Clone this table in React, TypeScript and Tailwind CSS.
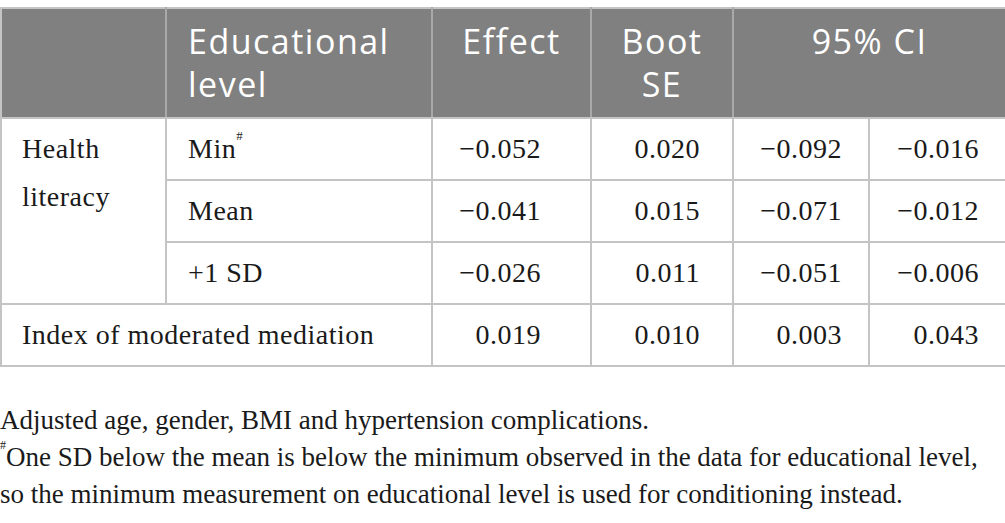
import * as React from "react";

const SANS = "font-['Open_Sans','Noto_Sans',sans-serif]";
const SERIF = "font-['Liberation_Serif','Times_New_Roman',serif]";

const LINE = "border-2 border-[#c4c4c4]";
const HEAD =
  "border-2 border-x-[#a9a9a9] border-t-[#c4c4c4] border-b-[#c4c4c4] align-top px-[21px] py-[11px] text-[34px] tracking-[1.5px] leading-[43px] font-normal text-white";
const CELL = `${LINE} align-top py-[6px] text-[28px] tracking-[0.5px] leading-[48px] text-[#1a1a1a]`;

type Row = { level: React.ReactNode; effect: string; se: string; lo: string; hi: string };

const rows: Row[] = [
  {
    level: (
      <>
        Min<sup className="text-[13px] align-[12px]">#</sup>
      </>
    ),
    effect: "−0.052",
    se: "0.020",
    lo: "−0.092",
    hi: "−0.016",
  },
  { level: "Mean", effect: "−0.041", se: "0.015", lo: "−0.071", hi: "−0.012" },
  { level: "+1 SD", effect: "−0.026", se: "0.011", lo: "−0.051", hi: "−0.006" },
];

function Nums({ r }: { r: Pick<Row, "effect" | "se" | "lo" | "hi"> }) {
  return (
    <>
      <td className={`${CELL} text-right pr-[49px]`}>{r.effect}</td>
      <td className={`${CELL} text-right pr-[32px]`}>{r.se}</td>
      <td className={`${CELL} text-right pr-[26px]`}>{r.lo}</td>
      <td className={`${CELL} text-right pr-[26px]`}>{r.hi}</td>
    </>
  );
}

export default function App() {
  return (
    <main className="w-[1005px] h-[523px] bg-white overflow-hidden pt-[7px]">
      <table className="w-[1005px] border-collapse table-fixed">
        <colgroup>
          <col className="w-[165px]" />
          <col className="w-[266px]" />
          <col className="w-[159px]" />
          <col className="w-[142px]" />
          <col className="w-[136px]" />
          <col className="w-[137px]" />
        </colgroup>
        <thead>
          <tr className={`bg-[#808080] ${SANS}`}>
            <th className={`${HEAD} border-l-[#c4c4c4]`} />
            <th className={`${HEAD} text-left`}>
              Educational
              <br />
              level
            </th>
            <th className={`${HEAD} text-center px-2`}>Effect</th>
            <th className={`${HEAD} text-center px-2`}>
              Boot
              <br />
              SE
            </th>
            <th colSpan={2} className={`${HEAD} border-r-[#c4c4c4] text-center`}>
              95% CI
            </th>
          </tr>
        </thead>
        <tbody className={SERIF}>
          {rows.map((r, i) => (
            <tr key={i}>
              {i === 0 && (
                <td rowSpan={3} className={`${CELL} pl-[20px]`}>
                  Health
                  <br />
                  literacy
                </td>
              )}
              <td className={`${CELL} pl-[21px]`}>{r.level}</td>
              <Nums r={r} />
            </tr>
          ))}
          <tr>
            <td colSpan={2} className={`${CELL} pl-[20px]`}>
              Index of moderated mediation
            </td>
            <Nums r={{ effect: "0.019", se: "0.010", lo: "0.003", hi: "0.043" }} />
          </tr>
        </tbody>
      </table>

      <div className={`${SERIF} mt-[35px] text-[27px] text-[#1a1a1a]`}>
        <p className="leading-[37px]">Adjusted age, gender, BMI and hypertension complications.</p>
        <p className="leading-[37px]">
          <sup className="text-[12px] align-[11px]">#</sup>One SD below the mean is below the minimum
          observed in the data for educational level,
          <br />
          so the minimum measurement on educational level is used for conditioning instead.
        </p>
      </div>
    </main>
  );
}
